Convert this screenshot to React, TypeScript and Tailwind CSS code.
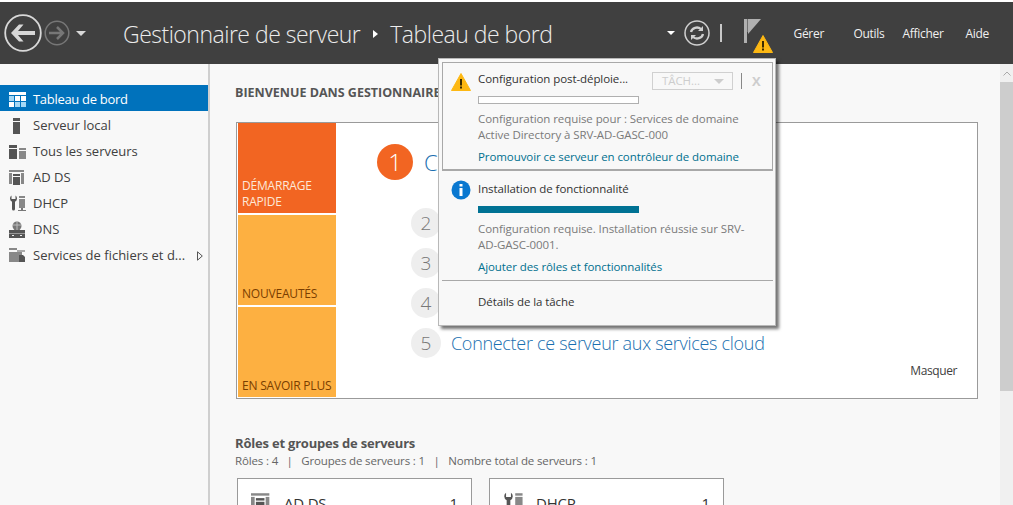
const font = { fontFamily: '"Open Sans", "Noto Sans", sans-serif' };

function Dashboard() {
  return (
    <svg width="18" height="16" viewBox="0 0 18 16">
      <rect x="0" y="0" width="17" height="3" fill="#fff" />
      <rect x="0" y="4" width="5" height="5" fill="#a5d8f5" />
      <rect x="6" y="4" width="5" height="5" fill="#fff" />
      <rect x="12" y="4" width="5" height="5" fill="#fff" />
      <rect x="0" y="10" width="5" height="5" fill="#fff" />
      <rect x="6" y="10" width="5" height="5" fill="#a5d8f5" />
      <rect x="12" y="10" width="5" height="5" fill="#a5d8f5" />
    </svg>
  );
}

function LocalServer() {
  return (
    <svg width="18" height="16" viewBox="0 0 18 16">
      <rect x="4" y="0" width="7" height="3" fill="#555" />
      <rect x="4" y="4" width="7" height="12" fill="#555" />
    </svg>
  );
}

function AllServers() {
  return (
    <svg width="18" height="16" viewBox="0 0 18 16">
      <rect x="0" y="1" width="8" height="3" fill="#555" />
      <rect x="0" y="5" width="8" height="10" fill="#555" />
      <rect x="10" y="4" width="7" height="2" fill="#888" />
      <rect x="10" y="7" width="7" height="8" fill="#888" />
    </svg>
  );
}

function AdDs({ size = 18 }: { size?: number }) {
  return (
    <svg width={size} height={size} viewBox="0 0 18 18">
      <rect x="0" y="1" width="15" height="2" fill="#888" />
      <rect x="0" y="4" width="3" height="11" fill="#888" />
      <rect x="12" y="4" width="3" height="11" fill="#888" />
      <rect x="4" y="5" width="7" height="2" fill="#555" />
      <rect x="4" y="8" width="7" height="8" fill="#555" />
    </svg>
  );
}

function Dhcp({ size = 18 }: { size?: number }) {
  return (
    <svg width={size} height={size} viewBox="0 0 18 18">
      <path d="M1 3.500a3.500 3.500 0 0 0 2 3.200V14a1.500 1.500 0 0 0 3 0V6.700a3.500 3.500 0 0 0 2-3.200 3.500 3.500 0 0 0-1.500-2.900V4h-4V.6A3.500 3.500 0 0 0 1 3.500z" fill="#555" />
      <rect x="10" y="1" width="6" height="2" fill="#888" />
      <rect x="10" y="4" width="6" height="9" fill="#888" />
      <rect x="12" y="13" width="2" height="2" fill="#777" />
      <rect x="9" y="15" width="8" height="1" fill="#777" />
    </svg>
  );
}

function Dns() {
  return (
    <svg width="18" height="18" viewBox="0 0 18 18">
      <circle cx="8" cy="5" r="4.500" fill="#777" />
      <path d="M4 4h8M8 1v8" stroke="#bbb" strokeWidth="1" />
      <rect x="0" y="9" width="16" height="8" fill="#555" />
      <rect x="0" y="12" width="16" height="1" fill="#999" />
      <rect x="3" y="14" width="2" height="1" fill="#eee" />
      <rect x="11" y="14" width="2" height="1" fill="#eee" />
    </svg>
  );
}

function Files() {
  return (
    <svg width="18" height="18" viewBox="0 0 18 18">
      <rect x="0" y="1" width="8" height="2" fill="#888" />
      <rect x="0" y="5" width="13" height="10" fill="#888" />
      <rect x="8" y="3" width="8" height="2" fill="#aaa" />
      <path d="M10 8h4l2 2v5h-6z" fill="#555" />
    </svg>
  );
}

const navItems = [
  { label: "Tableau de bord", icon: <Dashboard />, active: true },
  { label: "Serveur local", icon: <LocalServer /> },
  { label: "Tous les serveurs", icon: <AllServers /> },
  { label: "AD DS", icon: <AdDs /> },
  { label: "DHCP", icon: <Dhcp /> },
  { label: "DNS", icon: <Dns /> },
  { label: "Services de fichiers et d...", icon: <Files />, more: true },
];

const steps = [
  { n: 2, text: "Ajouter des rôles et des fonctionnalités" },
  { n: 3, text: "Ajouter d'autres serveurs à gérer" },
  { n: 4, text: "Créer un groupe de serveurs" },
  { n: 5, text: "Connecter ce serveur aux services cloud" },
];

function Warning({ w = 20 }: { w?: number }) {
  return (
    <svg width={w} height={w * 0.9} viewBox="0 0 20 18">
      <path d="M10 0.500 L19.500 17.500 H0.500 Z" fill="#fdb813" stroke="#fdb813" strokeLinejoin="round" />
      <rect x="9" y="6" width="2" height="6.500" fill="#3a2a00" />
      <rect x="9" y="13.500" width="2" height="2" fill="#3a2a00" />
    </svg>
  );
}

function Header() {
  return (
    <header className="h-[62px] mt-[2px] bg-[#404040] flex items-center shrink-0 relative">
      <svg width="38" height="38" viewBox="0 0 38 38" className="ml-[4px]">
        <circle cx="19" cy="19" r="17.800" fill="none" stroke="#d8d8d8" strokeWidth="1.800" />
        <path d="M15 10.500L7 19l8 8.500h4.500L14 21h17v-4H14l5.500-6.500z" fill="#d8d8d8" />
      </svg>
      <svg width="26" height="26" viewBox="0 0 26 26" className="ml-[2px]">
        <circle cx="13" cy="13" r="11.800" fill="none" stroke="#777" strokeWidth="1.500" />
        <path d="M5 13h14M13 7l6 6-6 6" fill="none" stroke="#777" strokeWidth="2.500" />
      </svg>
      <span className="ml-[6px] w-0 h-0 border-x-[5px] border-x-transparent border-t-[5px] border-t-[#d8d8d8]" />
      <div className="ml-[37px] mt-[2px] flex items-center text-[23px] font-light text-[#ececec] tracking-[-0.5px] whitespace-nowrap">
        <span>Gestionnaire de serveur</span>
        <span className="ml-[13px] mr-[12px] w-0 h-0 border-y-[4px] border-y-transparent border-l-[5px] border-l-white" />
        <span>Tableau de bord</span>
      </div>
      <div className="ml-auto flex items-center h-full">
        <span className="w-0 h-0 border-x-[4px] border-x-transparent border-t-[4px] border-t-white" />
        <svg width="26" height="26" viewBox="0 0 26 26" className="ml-[9px]">
          <circle cx="13" cy="13" r="12" fill="none" stroke="#d0d0d0" strokeWidth="1.500" />
          <path d="M7 12a6 5.500 0 0 1 10-3M19 14a6 5.500 0 0 1-10 3" fill="none" stroke="#d0d0d0" strokeWidth="2.300" />
          <path d="M19 6v5h-5zM7 20v-5h5z" fill="#d0d0d0" />
        </svg>
        <span className="ml-[10px] w-[2px] h-[18px] bg-[#c8c8c8]" />
        <div className="relative ml-[22px] w-[35px] h-[40px] mt-[11px]">
          <svg width="17" height="24" viewBox="0 0 17 24" className="absolute left-0 top-0">
            <rect x="0" y="0" width="3" height="24" fill="#b0b0b0" />
            <path d="M4 0h13L4 15z" fill="#b0b0b0" />
            <rect x="3" y="0" width="1" height="13" fill="#707070" />
          </svg>
          <div className="absolute left-[9px] top-[16px]">
            <Warning />
          </div>
        </div>
        <div className="flex items-center text-[12px] text-[#f0f0f0] tracking-[-0.3px] pr-[24px] ml-[15px] mt-[2px]">
          <span className="w-[60px]">Gérer</span>
          <span className="w-[49px]">Outils</span>
          <span className="w-[63px]">Afficher</span>
          <span>Aide</span>
        </div>
      </div>
    </header>
  );
}

function Sidebar() {
  return (
    <aside className="w-[210px] shrink-0 bg-[#f8f8f8] border-r-2 border-[#cfcfcf] pt-[21px]">
      {navItems.map((item) => (
        <div
          key={item.label}
          className={`h-[26px] pt-[4px] flex items-center text-[13px] whitespace-nowrap ${item.active ? "bg-[#0072bc] text-white tracking-[-0.3px]" : "text-[#404040]"}`}
        >
          <span className="ml-[9px] w-[24px] flex items-center">{item.icon}</span>
          <span>{item.label}</span>
          {item.more && (
            <svg width="6" height="10" viewBox="0 0 6 10" className="ml-auto mr-[5px]">
              <path d="M0.500 0.800L5.300 5 0.500 9.200z" fill="none" stroke="#555" />
            </svg>
          )}
        </div>
      ))}
    </aside>
  );
}

function Tile({ label, tone }: { label: string; tone: "hot" | "warm" }) {
  return (
    <div
      className={`flex-1 flex items-end px-[4px] pb-[3px] text-[12px] leading-[16px] tracking-[-0.2px] ${tone === "hot" ? "bg-[#f26522] text-[#fde8d8]" : "bg-[#fdb041] text-[#7a3e00]"}`}
    >
      <span>{label}</span>
    </div>
  );
}

function QuickStart() {
  return (
    <div className="w-[742px] h-[277px] mt-[21px] ml-[26px] bg-white border border-[#9a9a9a] px-[1px] pb-[1px] flex relative">
      <div className="w-[98px] flex flex-col gap-[2px]">
        <Tile label="DÉMARRAGE RAPIDE" tone="hot" />
        <Tile label="NOUVEAUTÉS" tone="warm" />
        <Tile label="EN SAVOIR PLUS" tone="warm" />
      </div>
      <div className="flex-1 pt-[21px]">
        <div className="flex items-center ml-[41px] h-[36px]">
          <div className="w-[36px] h-[36px] rounded-full bg-[#f26522] text-white text-[24px] font-light flex items-center justify-center">1</div>
          <span className="ml-[11px] text-[22px] font-light text-[#1a6fb0] whitespace-nowrap">Configurer ce serveur local</span>
        </div>
        <div className="mt-[28px] ml-[75px] flex flex-col gap-[10px]">
          {steps.map((s) => (
            <div key={s.n} className="flex items-center h-[30px]">
              <div className="w-[30px] h-[30px] rounded-full bg-[#eeeeee] text-[#777] text-[19px] font-light flex items-center justify-center">{s.n}</div>
              <span className="ml-[10px] text-[18px] font-light text-[#1a6fb0] tracking-[-0.3px] whitespace-nowrap">{s.text}</span>
            </div>
          ))}
        </div>
      </div>
      <span className="absolute right-[20px] bottom-[18px] text-[12px] text-[#404040] tracking-[-0.4px]">Masquer</span>
    </div>
  );
}

function RoleCard({ icon, name }: { icon: React.ReactNode; name: string }) {
  return (
    <div className="w-[235px] h-[60px] bg-white border border-[#9a9a9a] flex items-start pt-[13px] pl-[13px] pr-[13px]">
      <span className="w-[33px]">{icon}</span>
      <span className="text-[15px] text-[#333] tracking-[-0.2px]">{name}</span>
      <span className="ml-auto text-[15px] text-[#333]">1</span>
    </div>
  );
}

function NotificationPanel() {
  return (
    <div className="absolute left-[438px] top-[58px] w-[338px] h-[268px] bg-[#f8f8f8] border border-[#b8b8b8] shadow-[3px_3px_3px_rgba(0,0,0,0.55)] p-[3px] text-[11.5px] tracking-[-0.08px] z-10">
      <div className="h-[109px] w-[331px] border border-[#a8a8a8] border-b-2 pl-[35px] pt-[7px] relative">
        <div className="absolute left-[8px] top-[10px]">
          <Warning />
        </div>
        <div className="flex items-center justify-between h-[18px]">
          <span className="text-[#333] whitespace-nowrap">Configuration post-déploie...</span>
        </div>
        <div className="absolute left-[209px] top-[9px] w-[81px] h-[18px] border border-[#d0d0d0] flex items-center px-[9px] text-[#cdcdcd]">
          <span>TÂCH...</span>
          <span className="ml-auto mr-[-1px] w-0 h-0 border-x-[5px] border-x-transparent border-t-[5px] border-t-[#cdcdcd]" />
        </div>
        <span className="absolute left-[298px] top-[10px] w-px h-[16px] bg-[#888]" />
        <span className="absolute left-[309px] top-[9px] text-[13px] font-bold text-[#cdcdcd]">X</span>
        <div className="mt-[8px] w-[161px] h-[8px] bg-white border border-[#b0b0b0]" />
        <p className="mt-[7px] leading-[16px] text-[#7a7a7a] whitespace-nowrap">
          Configuration requise pour : Services de domaine
          <br />
          Active Directory à SRV-AD-GASC-000
        </p>
        <p className="mt-[5px] text-[#00708f] whitespace-nowrap">Promouvoir ce serveur en contrôleur de domaine</p>
      </div>
      <div className="w-[331px] h-[110px] pl-[36px] pt-[9px] relative border-b border-[#a8a8a8]">
        <svg width="20" height="20" viewBox="0 0 20 20" className="absolute left-[9px] top-[9px]">
          <circle cx="10" cy="10" r="9.500" fill="#0a78d0" />
          <rect x="8.500" y="4" width="3" height="2.500" fill="#fff" />
          <rect x="8.500" y="8" width="3" height="8" fill="#fff" />
        </svg>
        <p className="text-[#333] leading-[18px]">Installation de fonctionnalité</p>
        <div className="mt-[8px] w-[161px] h-[7px] bg-[#007294]" />
        <p className="mt-[8px] leading-[16px] text-[#7a7a7a] whitespace-nowrap">
          Configuration requise. Installation réussie sur SRV-
          <br />
          AD-GASC-0001.
        </p>
        <p className="mt-[5px] text-[#00708f] whitespace-nowrap">Ajouter des rôles et fonctionnalités</p>
      </div>
      <p className="pl-[36px] pt-[12px] text-[#333]">Détails de la tâche</p>
    </div>
  );
}

export default function App() {
  return (
    <div className="relative w-[1013px] h-[505px] overflow-hidden bg-white flex flex-col" style={font}>
      <Header />
      <div className="flex flex-1 min-h-0 bg-[#f8f8f8]">
        <Sidebar />
        <main className="flex-1 min-w-0 overflow-hidden">
          <h1 className="ml-[25px] mt-[20px] text-[12.5px] leading-[17px] font-bold text-[#555] whitespace-nowrap">BIENVENUE DANS GESTIONNAIRE DE SERVEUR</h1>
          <QuickStart />
          <h2 className="ml-[25px] mt-[36px] text-[13px] leading-[16px] font-bold text-[#555] tracking-[-0.2px]">Rôles et groupes de serveurs</h2>
          <p className="ml-[25px] mt-[2px] text-[11.5px] leading-[16px] text-[#666] tracking-[-0.15px] whitespace-pre">Rôles : 4   |   Groupes de serveurs : 1   |   Nombre total de serveurs : 1</p>
          <div className="ml-[27px] mt-[9px] flex gap-[17px]">
            <RoleCard icon={<AdDs size={22} />} name="AD DS" />
            <RoleCard icon={<Dhcp size={22} />} name="DHCP" />
          </div>
        </main>
        <div className="w-[13px] shrink-0 bg-[#f0f0f0] flex flex-col">
          <div className="h-[18px] flex items-center justify-center">
            <svg width="8" height="5" viewBox="0 0 8 5">
              <path d="M0.500 4.500L4 1l3.500 3.500" fill="none" stroke="#aaa" />
            </svg>
          </div>
          <div className="h-[309px] bg-[#cdcdcd]" />
        </div>
      </div>
      <NotificationPanel />
    </div>
  );
}
